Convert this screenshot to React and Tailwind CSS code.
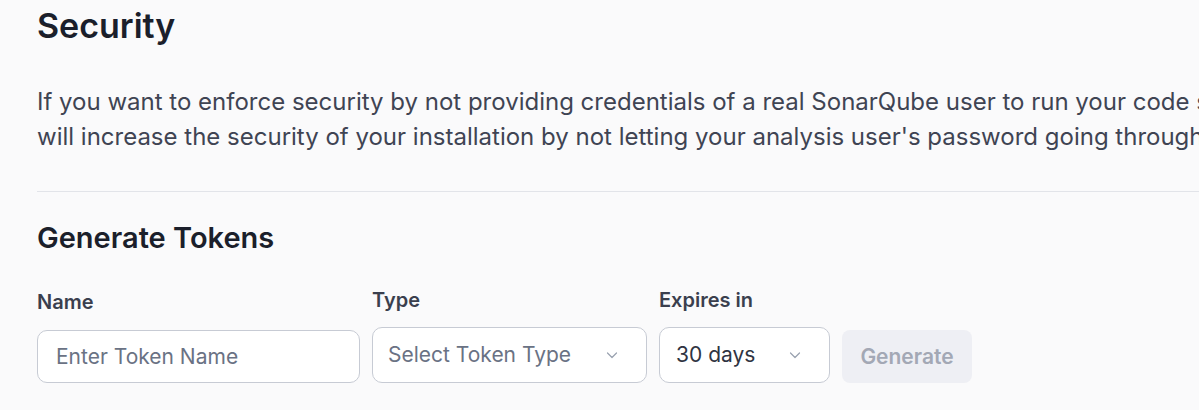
import React from "react";

const Chevron = () => (
  <svg width="16" height="16" viewBox="0 0 16 16" fill="none" className="text-gray-400">
    <path d="M3.5 6l4.5 4.5L12.5 6" stroke="currentColor" strokeWidth="1.2" strokeLinecap="round" strokeLinejoin="round" />
  </svg>
);

const App = () => {
  return (
    <div className="w-screen h-[410px] overflow-hidden bg-[#fafafb] font-['Inter',sans-serif]">
      <div className="pl-[37px] w-[2800px]">
        <h1 className="text-[34px] font-semibold text-[#1b1f2b] leading-[40px] pt-[6px]">Security</h1>
        <p className="mt-[38px] text-[24px] leading-[35px] text-[#3f4453]">
          <span className="block whitespace-nowrap">
            If you want to enforce security by not providing credentials of a real SonarQube user to run your code scan or to invoke web services, you can provide a User Token as a replacement of the user login. This
          </span>
          <span className="block whitespace-nowrap">
            will increase the security of your installation by not letting your analysis user's password going through your network.
          </span>
        </p>
        <div className="mt-[37px] w-[1200px] border-t border-[#e2e4e9]" />
        <h2 className="mt-[28px] text-[29px] font-semibold text-[#1b1f2b] leading-[36px]">Generate Tokens</h2>
        <div className="mt-[32px] flex items-start gap-3">
          <div className="flex flex-col pt-[2px]">
            <label className="text-[20px] font-semibold text-[#3a3f4e] leading-[24px] mb-[16px]">Name</label>
            <input
              placeholder="Enter Token Name"
              className="w-[323px] h-[53px] rounded-[10px] border border-[#c7cbd4] bg-white px-[18px] text-[21px] placeholder:text-[#6a7284] outline-none"
            />
          </div>
          <div className="flex flex-col">
            <label className="text-[20px] font-semibold text-[#3a3f4e] leading-[24px] mb-[15px]">Type</label>
            <div className="w-[275px] h-[56px] rounded-[10px] border border-[#c7cbd4] bg-white pl-[15px] pr-[26px] flex items-center justify-between">
              <span className="text-[21px] text-[#6a7284]">Select Token Type</span>
              <Chevron />
            </div>
          </div>
          <div className="flex flex-col">
            <label className="text-[20px] font-semibold text-[#3a3f4e] leading-[24px] mb-[15px]">Expires in</label>
            <div className="w-[171px] h-[56px] rounded-[10px] border border-[#c7cbd4] bg-white pl-[16px] pr-[26px] flex items-center justify-between">
              <span className="text-[21px] text-[#2f3442]">30 days</span>
              <Chevron />
            </div>
          </div>
          <button className="mt-[42px] h-[53px] w-[130px] rounded-[8px] bg-[#eeeff4] text-[21px] font-semibold text-[#a3a8b5]">
            Generate
          </button>
        </div>
      </div>
    </div>
  );
};

export default App;
